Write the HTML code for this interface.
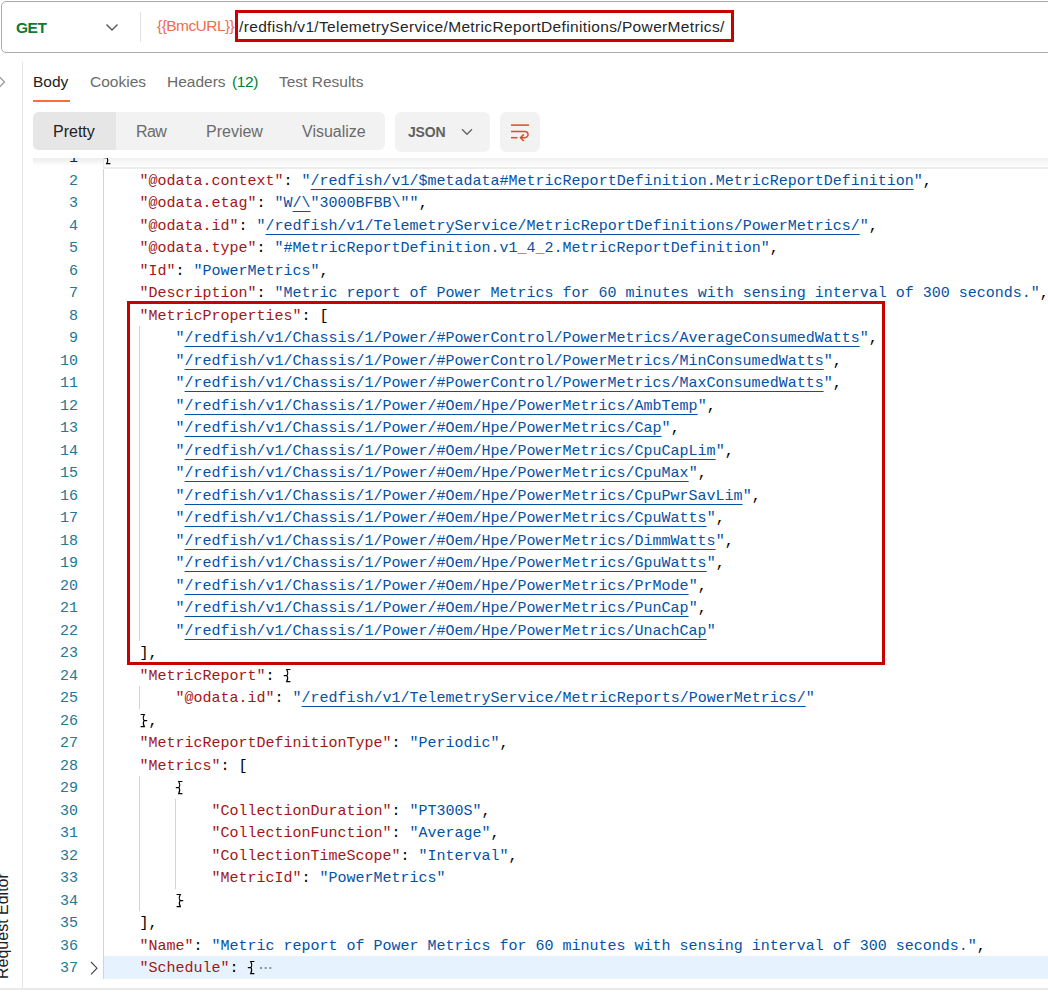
<!DOCTYPE html><html><head><meta charset='utf-8'><style>
*{box-sizing:border-box}
html,body{margin:0;padding:0;background:#fff;width:1048px;height:994px;overflow:hidden;position:relative;font-family:"Liberation Sans",sans-serif}
.abs{position:absolute;white-space:pre}
.urlbar{position:absolute;left:1px;top:1px;width:1200px;height:52px;border:1px solid #ababab;border-radius:5px}
.redbox{position:absolute;border:3px solid #c80000}
.tab{position:absolute;top:73px;font-size:15.5px;line-height:18px;color:#6b6b6b;white-space:pre}
.seg{position:absolute;background:#f2f2f2;border-radius:6px}
.segt{position:absolute;top:122.5px;font-size:16px;line-height:18px;color:#6b6b6b;white-space:pre}
.editor{position:absolute;left:33px;top:158px;width:1015px;height:830px;overflow:hidden}
.code{position:absolute;left:0;top:0;width:100%;height:100%}
.ln{position:absolute;left:103.5px;right:-2000px;height:22.5px;line-height:22.5px;padding-top:2.0px;font-family:"Liberation Mono",monospace;font-size:15px;white-space:pre;color:#000}
.num{position:absolute;left:0;width:78px;text-align:right;height:22.5px;line-height:22.5px;padding-top:2.0px;font-family:"Liberation Mono",monospace;font-size:15px;color:#237893}
.fold{background:#e6f3ff}
.k{color:#a31515}
.s{color:#0451a5}
.l{color:#0451a5;text-decoration:underline;text-underline-offset:4px}
.bt{color:transparent}
.brs{position:absolute;overflow:visible}
.p{color:#000}
.e{color:#8c8c8c}
.guide{position:absolute;width:1px;background:#d3d3d3}
</style></head><body>
<div class="urlbar"></div>
<div class="abs" style="left:16px;top:18.6px;font-size:15.5px;letter-spacing:-0.5px;line-height:18px;font-weight:700;color:#0b7a33">GET</div>
<svg class="abs" style="left:105px;top:21.7px" width="14" height="12" viewBox="0 0 14 12"><path d="M1.5 2.5 L7 8 L12.5 2.5" fill="none" stroke="#555" stroke-width="1.4"/></svg>
<div class="abs" style="left:140px;top:12px;width:1px;height:30px;background:#e2e2e2"></div>
<div class="abs" style="left:157px;top:17.2px;font-size:15.5px;letter-spacing:-0.55px;line-height:18px;color:#f26b4f">{{BmcURL}}</div>
<div class="abs" style="left:239px;top:17.7px;font-size:15.5px;letter-spacing:0.35px;line-height:18px;color:#262626">/redfish/v1/TelemetryService/MetricReportDefinitions/PowerMetrics/</div>
<div class="redbox" style="left:235px;top:10px;width:499px;height:32px"></div>

<div class="abs" style="left:22px;top:62px;width:1px;height:926px;background:#e6e6e6"></div>
<svg class="abs" style="left:-4px;top:75px" width="12" height="14" viewBox="0 0 12 14"><path d="M3 1.5 L8.5 7 L3 12.5" fill="none" stroke="#a0a0a0" stroke-width="1.4"/></svg>

<div class="tab" style="left:33px;color:#212121">Body</div>
<div class="abs" style="left:33px;top:100px;width:37px;height:2px;background:#ff6c37"></div>
<div class="tab" style="left:90px">Cookies</div>
<div class="tab" style="left:167px">Headers<span style="color:#007f31;margin-left:6.5px;letter-spacing:-0.4px">(12)</span></div>
<div class="tab" style="left:279px">Test Results</div>

<div class="seg" style="left:33px;top:112px;width:352px;height:38px"></div>
<div class="abs" style="left:33px;top:112px;width:83px;height:38px;background:#e6e6e6;border-radius:6px 0 0 6px"></div>
<div class="segt" style="left:53px;color:#212121">Pretty</div>
<div class="segt" style="left:136px;letter-spacing:-0.6px">Raw</div>
<div class="segt" style="left:206px">Preview</div>
<div class="segt" style="left:302px">Visualize</div>

<div class="seg" style="left:395px;top:112px;width:95px;height:40px"></div>
<div class="abs" style="left:408px;top:123px;font-size:14px;letter-spacing:-0.2px;line-height:18px;font-weight:700;color:#616161">JSON</div>
<svg class="abs" style="left:460px;top:127px" width="14" height="10" viewBox="0 0 14 10"><path d="M2 2.3 L7 7.3 L12 2.3" fill="none" stroke="#666" stroke-width="1.4"/></svg>

<div class="seg" style="left:500px;top:112px;width:40px;height:40px"></div>
<svg class="abs" style="left:500px;top:112px" width="40" height="40" viewBox="0 0 40 40">
 <g fill="none" stroke="#d9501e" stroke-width="1.5" stroke-linecap="butt">
  <path d="M11 13.1 H29"/>
  <path d="M11 19.4 H24.9 A3.15 3.15 0 0 1 24.9 25.7 H21"/>
  <path d="M11 25.7 H17.5"/>
  <path d="M23.8 22.4 L20.5 25.7 L23.8 29"/>
 </g>
</svg>

<div class="redbox" style="left:127px;top:301px;width:758px;height:364px;z-index:5"></div>
<svg class="abs" style="left:86.5px;top:958.5px;z-index:6" width="14" height="18" viewBox="0 0 14 18"><path d="M4 3 L10 9.2 L4 15.4" fill="none" stroke="#424242" stroke-width="1.1"/></svg>
<div class="editor">
 <div class="code" style="left:-33px;top:-158px;width:1081px;height:988px">
 <div class='abs' style='left:33px;top:158px;width:70px;height:8px;background:linear-gradient(#ececec,#fff)'></div>
 <div class='abs' style='left:103px;top:158px;width:1px;height:10px;background:#e8e8e8'></div>
 <div class='abs' style='left:104px;top:158px;width:1000px;height:9px;background:linear-gradient(#f1f1f1,#fefefe)'></div>
 <div class='abs' style='left:104px;top:167px;width:1000px;height:2px;background:#ececec'></div>
 <div class="guide" style="left:103px;top:168.9px;height:810.0px"></div><div class="guide" style="left:139px;top:326.4px;height:315.0px"></div><div class="guide" style="left:139px;top:686.4px;height:22.5px"></div><div class="guide" style="left:139px;top:776.4px;height:135.0px"></div><div class="guide" style="left:175px;top:798.9px;height:90.0px"></div>
 <div class="ln" style="top:146.4px"><span class="bt">{</span></div><div class="ln" style="top:168.9px">    <span class="k">&quot;@odata.context&quot;</span><span class="p">: </span><span class="s">&quot;</span><span class="l">/redfish/v1/$metadata#MetricReportDefinition.MetricReportDefinition</span><span class="s">&quot;</span><span class="p">,</span></div><div class="ln" style="top:191.4px">    <span class="k">&quot;@odata.etag&quot;</span><span class="p">: </span><span class="s">&quot;W</span><span class="l">/\</span><span class="s">&quot;3000BFBB\&quot;&quot;</span><span class="p">,</span></div><div class="ln" style="top:213.9px">    <span class="k">&quot;@odata.id&quot;</span><span class="p">: </span><span class="s">&quot;</span><span class="l">/redfish/v1/TelemetryService/MetricReportDefinitions/PowerMetrics/</span><span class="s">&quot;</span><span class="p">,</span></div><div class="ln" style="top:236.4px">    <span class="k">&quot;@odata.type&quot;</span><span class="p">: </span><span class="s">&quot;#MetricReportDefinition.v1_4_2.MetricReportDefinition&quot;</span><span class="p">,</span></div><div class="ln" style="top:258.9px">    <span class="k">&quot;Id&quot;</span><span class="p">: </span><span class="s">&quot;PowerMetrics&quot;</span><span class="p">,</span></div><div class="ln" style="top:281.4px">    <span class="k">&quot;Description&quot;</span><span class="p">: </span><span class="s">&quot;Metric report of Power Metrics for 60 minutes with sensing interval of 300 seconds.&quot;</span><span class="p">,</span></div><div class="ln" style="top:303.9px">    <span class="k">&quot;MetricProperties&quot;</span><span class="p">: [</span></div><div class="ln" style="top:326.4px">        <span class="s">&quot;</span><span class="l">/redfish/v1/Chassis/1/Power/#PowerControl/PowerMetrics/AverageConsumedWatts</span><span class="s">&quot;</span><span class="p">,</span></div><div class="ln" style="top:348.9px">        <span class="s">&quot;</span><span class="l">/redfish/v1/Chassis/1/Power/#PowerControl/PowerMetrics/MinConsumedWatts</span><span class="s">&quot;</span><span class="p">,</span></div><div class="ln" style="top:371.4px">        <span class="s">&quot;</span><span class="l">/redfish/v1/Chassis/1/Power/#PowerControl/PowerMetrics/MaxConsumedWatts</span><span class="s">&quot;</span><span class="p">,</span></div><div class="ln" style="top:393.9px">        <span class="s">&quot;</span><span class="l">/redfish/v1/Chassis/1/Power/#Oem/Hpe/PowerMetrics/AmbTemp</span><span class="s">&quot;</span><span class="p">,</span></div><div class="ln" style="top:416.4px">        <span class="s">&quot;</span><span class="l">/redfish/v1/Chassis/1/Power/#Oem/Hpe/PowerMetrics/Cap</span><span class="s">&quot;</span><span class="p">,</span></div><div class="ln" style="top:438.9px">        <span class="s">&quot;</span><span class="l">/redfish/v1/Chassis/1/Power/#Oem/Hpe/PowerMetrics/CpuCapLim</span><span class="s">&quot;</span><span class="p">,</span></div><div class="ln" style="top:461.4px">        <span class="s">&quot;</span><span class="l">/redfish/v1/Chassis/1/Power/#Oem/Hpe/PowerMetrics/CpuMax</span><span class="s">&quot;</span><span class="p">,</span></div><div class="ln" style="top:483.9px">        <span class="s">&quot;</span><span class="l">/redfish/v1/Chassis/1/Power/#Oem/Hpe/PowerMetrics/CpuPwrSavLim</span><span class="s">&quot;</span><span class="p">,</span></div><div class="ln" style="top:506.4px">        <span class="s">&quot;</span><span class="l">/redfish/v1/Chassis/1/Power/#Oem/Hpe/PowerMetrics/CpuWatts</span><span class="s">&quot;</span><span class="p">,</span></div><div class="ln" style="top:528.9px">        <span class="s">&quot;</span><span class="l">/redfish/v1/Chassis/1/Power/#Oem/Hpe/PowerMetrics/DimmWatts</span><span class="s">&quot;</span><span class="p">,</span></div><div class="ln" style="top:551.4px">        <span class="s">&quot;</span><span class="l">/redfish/v1/Chassis/1/Power/#Oem/Hpe/PowerMetrics/GpuWatts</span><span class="s">&quot;</span><span class="p">,</span></div><div class="ln" style="top:573.9px">        <span class="s">&quot;</span><span class="l">/redfish/v1/Chassis/1/Power/#Oem/Hpe/PowerMetrics/PrMode</span><span class="s">&quot;</span><span class="p">,</span></div><div class="ln" style="top:596.4px">        <span class="s">&quot;</span><span class="l">/redfish/v1/Chassis/1/Power/#Oem/Hpe/PowerMetrics/PunCap</span><span class="s">&quot;</span><span class="p">,</span></div><div class="ln" style="top:618.9px">        <span class="s">&quot;</span><span class="l">/redfish/v1/Chassis/1/Power/#Oem/Hpe/PowerMetrics/UnachCap</span><span class="s">&quot;</span></div><div class="ln" style="top:641.4px">    <span class="p">],</span></div><div class="ln" style="top:663.9px">    <span class="k">&quot;MetricReport&quot;</span><span class="p">: </span><span class="bt">{</span></div><div class="ln" style="top:686.4px">        <span class="k">&quot;@odata.id&quot;</span><span class="p">: </span><span class="s">&quot;</span><span class="l">/redfish/v1/TelemetryService/MetricReports/PowerMetrics/</span><span class="s">&quot;</span></div><div class="ln" style="top:708.9px">    <span class="bt">}</span><span class="p">,</span></div><div class="ln" style="top:731.4px">    <span class="k">&quot;MetricReportDefinitionType&quot;</span><span class="p">: </span><span class="s">&quot;Periodic&quot;</span><span class="p">,</span></div><div class="ln" style="top:753.9px">    <span class="k">&quot;Metrics&quot;</span><span class="p">: [</span></div><div class="ln" style="top:776.4px">        <span class="bt">{</span></div><div class="ln" style="top:798.9px">            <span class="k">&quot;CollectionDuration&quot;</span><span class="p">: </span><span class="s">&quot;PT300S&quot;</span><span class="p">,</span></div><div class="ln" style="top:821.4px">            <span class="k">&quot;CollectionFunction&quot;</span><span class="p">: </span><span class="s">&quot;Average&quot;</span><span class="p">,</span></div><div class="ln" style="top:843.9px">            <span class="k">&quot;CollectionTimeScope&quot;</span><span class="p">: </span><span class="s">&quot;Interval&quot;</span><span class="p">,</span></div><div class="ln" style="top:866.4px">            <span class="k">&quot;MetricId&quot;</span><span class="p">: </span><span class="s">&quot;PowerMetrics&quot;</span></div><div class="ln" style="top:888.9px">        <span class="bt">}</span></div><div class="ln" style="top:911.4px">    <span class="p">],</span></div><div class="ln" style="top:933.9px">    <span class="k">&quot;Name&quot;</span><span class="p">: </span><span class="s">&quot;Metric report of Power Metrics for 60 minutes with sensing interval of 300 seconds.&quot;</span><span class="p">,</span></div><div class="ln fold" style="top:956.4px">    <span class="k">&quot;Schedule&quot;</span><span class="p">: </span><span class="bt">{</span></div>
 <div class="num" style="top:146.4px;color:#0b216f">1</div><div class="num" style="top:168.9px">2</div><div class="num" style="top:191.4px">3</div><div class="num" style="top:213.9px">4</div><div class="num" style="top:236.4px">5</div><div class="num" style="top:258.9px">6</div><div class="num" style="top:281.4px">7</div><div class="num" style="top:303.9px">8</div><div class="num" style="top:326.4px">9</div><div class="num" style="top:348.9px">10</div><div class="num" style="top:371.4px">11</div><div class="num" style="top:393.9px">12</div><div class="num" style="top:416.4px">13</div><div class="num" style="top:438.9px">14</div><div class="num" style="top:461.4px">15</div><div class="num" style="top:483.9px">16</div><div class="num" style="top:506.4px">17</div><div class="num" style="top:528.9px">18</div><div class="num" style="top:551.4px">19</div><div class="num" style="top:573.9px">20</div><div class="num" style="top:596.4px">21</div><div class="num" style="top:618.9px">22</div><div class="num" style="top:641.4px">23</div><div class="num" style="top:663.9px">24</div><div class="num" style="top:686.4px">25</div><div class="num" style="top:708.9px">26</div><div class="num" style="top:731.4px">27</div><div class="num" style="top:753.9px">28</div><div class="num" style="top:776.4px">29</div><div class="num" style="top:798.9px">30</div><div class="num" style="top:821.4px">31</div><div class="num" style="top:843.9px">32</div><div class="num" style="top:866.4px">33</div><div class="num" style="top:888.9px">34</div><div class="num" style="top:911.4px">35</div><div class="num" style="top:933.9px">36</div><div class="num" style="top:956.4px">37</div>
 <svg class="brs" style="left:103.1px;top:146.4px" width="9" height="23" viewBox="0 0 9 23"><path d="M7.4 5.5 H3.7 Q5.6 8.5 4 11.6 H0.8 M4 11.6 Q5.6 14.6 3.7 17.6 H7.4" fill="none" stroke="#000" stroke-width="1.1"/></svg><svg class="brs" style="left:283.1px;top:663.9px" width="9" height="23" viewBox="0 0 9 23"><path d="M7.4 5.5 H3.7 Q5.6 8.5 4 11.6 H0.8 M4 11.6 Q5.6 14.6 3.7 17.6 H7.4" fill="none" stroke="#000" stroke-width="1.1"/></svg><svg class="brs" style="left:139.1px;top:708.9px" width="9" height="23" viewBox="0 0 9 23"><path d="M1.6 5.5 H5.3 Q3.4 8.5 5 11.6 H8.2 M5 11.6 Q3.4 14.6 5.3 17.6 H1.6" fill="none" stroke="#000" stroke-width="1.1"/></svg><svg class="brs" style="left:175.1px;top:776.4px" width="9" height="23" viewBox="0 0 9 23"><path d="M7.4 5.5 H3.7 Q5.6 8.5 4 11.6 H0.8 M4 11.6 Q5.6 14.6 3.7 17.6 H7.4" fill="none" stroke="#000" stroke-width="1.1"/></svg><svg class="brs" style="left:175.1px;top:888.9px" width="9" height="23" viewBox="0 0 9 23"><path d="M1.6 5.5 H5.3 Q3.4 8.5 5 11.6 H8.2 M5 11.6 Q3.4 14.6 5.3 17.6 H1.6" fill="none" stroke="#000" stroke-width="1.1"/></svg><svg class="brs" style="left:247.1px;top:956.4px" width="9" height="23" viewBox="0 0 9 23"><path d="M7.4 5.5 H3.7 Q5.6 8.5 4 11.6 H0.8 M4 11.6 Q5.6 14.6 3.7 17.6 H7.4" fill="none" stroke="#000" stroke-width="1.1"/></svg>
 </div>
</div>
<div class='abs' style='left:260px;top:967px;width:2px;height:2px;background:#8c9099;box-shadow:4.6px 0 0 #8c9099, 9.3px 0 0 #8c9099'></div>
<div class="abs" style="left:0;top:988px;width:1048px;height:2px;background:#e9e9e9"></div>
<div class="abs" style="left:-6px;top:979px;transform-origin:0 0;transform:rotate(-90deg);font-size:16px;line-height:18px;color:#212121">Request Editor</div>
</body></html>
